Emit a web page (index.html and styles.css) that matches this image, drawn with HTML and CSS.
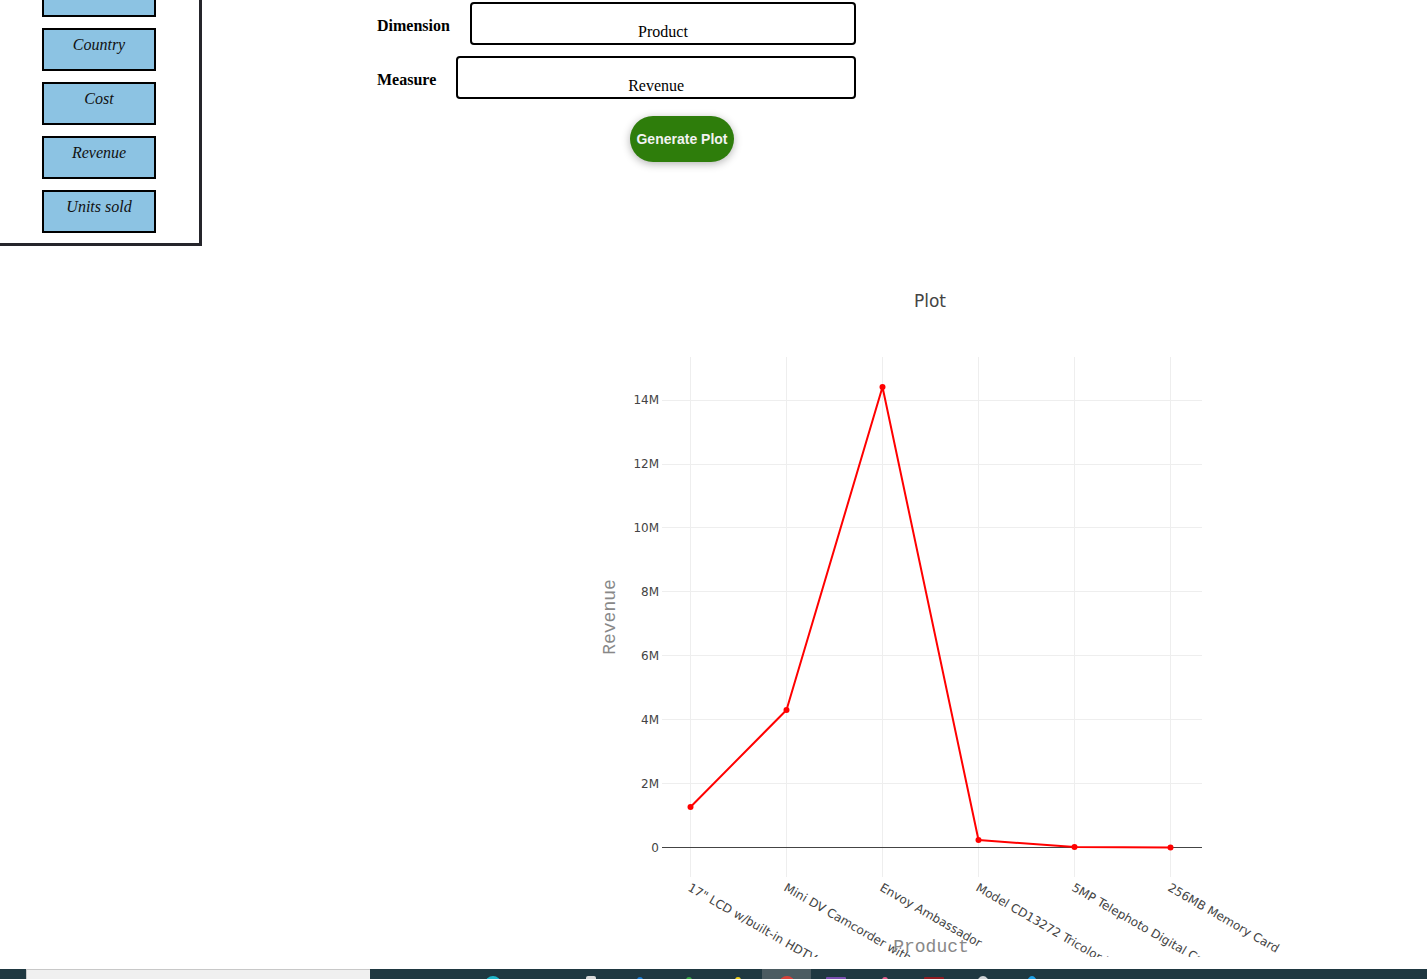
FILE: index.html
```html
<!DOCTYPE html>
<html>
<head>
<meta charset="utf-8">
<title>Plot builder</title>
<link rel="stylesheet" href="styles.css">
</head>
<body>
<div class="top">
  <div class="sidebar">
    <div class="field">Product</div>
    <div class="field">Country</div>
    <div class="field">Cost</div>
    <div class="field">Revenue</div>
    <div class="field">Units sold</div>
  </div>
  <div class="form">
    <div class="row">
      <label class="lbl">Dimension</label>
      <input class="box" type="text" value="Product" readonly>
    </div>
    <div class="row row2">
      <label class="lbl">Measure</label>
      <input class="box" type="text" value="Revenue" readonly>
    </div>
    <button class="gen">Generate Plot</button>
  </div>
</div>

<div class="chart">
  <svg width="700" height="700" viewBox="0 0 700 700" xmlns="http://www.w3.org/2000/svg">
    <rect x="0" y="0" width="700" height="700" fill="#fff"/>
    <g class="grid" stroke="#eeeeee" stroke-width="1">
      <line x1="108.5" y1="100" x2="108.5" y2="620"/>
      <line x1="204.5" y1="100" x2="204.5" y2="620"/>
      <line x1="300.5" y1="100" x2="300.5" y2="620"/>
      <line x1="396.5" y1="100" x2="396.5" y2="620"/>
      <line x1="492.5" y1="100" x2="492.5" y2="620"/>
      <line x1="588.5" y1="100" x2="588.5" y2="620"/>
      <line x1="80" y1="526.5" x2="620" y2="526.5"/>
      <line x1="80" y1="462.5" x2="620" y2="462.5"/>
      <line x1="80" y1="398.5" x2="620" y2="398.5"/>
      <line x1="80" y1="334.5" x2="620" y2="334.5"/>
      <line x1="80" y1="270.5" x2="620" y2="270.5"/>
      <line x1="80" y1="207.5" x2="620" y2="207.5"/>
      <line x1="80" y1="143.5" x2="620" y2="143.5"/>
    </g>
    <line x1="80" y1="590.5" x2="620" y2="590.5" stroke="#444" stroke-width="1"/>
    <g class="ytick" font-family="DejaVu Sans, sans-serif" font-size="12" fill="#444" text-anchor="end">
      <text x="77" y="594.7">0</text>
      <text x="77" y="530.8">2M</text>
      <text x="77" y="466.9">4M</text>
      <text x="77" y="403">6M</text>
      <text x="77" y="339.1">8M</text>
      <text x="77" y="275.2">10M</text>
      <text x="77" y="211.3">12M</text>
      <text x="77" y="147.4">14M</text>
    </g>
    <polyline points="108.5,550 204.5,453 300.5,130 396.5,583 492.5,590 588.5,590.5" fill="none" stroke="#ff0000" stroke-width="2" stroke-linejoin="round"/>
    <g fill="#ff0000">
      <circle cx="108.5" cy="550" r="3"/>
      <circle cx="204.5" cy="453" r="3"/>
      <circle cx="300.5" cy="130" r="3"/>
      <circle cx="396.5" cy="583" r="3"/>
      <circle cx="492.5" cy="590" r="3"/>
      <circle cx="588.5" cy="590.5" r="3"/>
    </g>
    <g class="xtick" font-family="DejaVu Sans, sans-serif" font-size="12" fill="#444">
      <text transform="translate(105,633) rotate(30)">17" LCD w/built-in HDTV Tuner</text>
      <text transform="translate(201,633) rotate(30)">Mini DV Camcorder with 3.5" Swivel LCD</text>
      <text transform="translate(297,633) rotate(30)">Envoy Ambassador</text>
      <text transform="translate(393,633) rotate(30)">Model CD13272 Tricolor Ink Cartridge</text>
      <text transform="translate(489,633) rotate(30)">5MP Telephoto Digital Camera</text>
      <text transform="translate(585,633) rotate(30)">256MB Memory Card</text>
    </g>
    <text x="348" y="50" font-family="DejaVu Sans, sans-serif" font-size="17" fill="#444" text-anchor="middle">Plot</text>
    <text x="349" y="695" font-family="Liberation Mono, monospace" font-size="18" fill="#888" text-anchor="middle">Product</text>
    <text transform="translate(33,360) rotate(-90)" font-family="Liberation Mono, monospace" font-size="18" fill="#888" text-anchor="middle">Revenue</text>
  </svg>
</div>

<div class="taskbar">
  <div class="search"></div>
  <div class="icons">
    <span class="slot"><i class="ic ic-teal"></i></span>
    <span class="slot"></span>
    <span class="slot"><i class="ic ic-grey"></i></span>
    <span class="slot"><i class="ic ic-blue small"></i></span>
    <span class="slot"><i class="ic ic-green small"></i></span>
    <span class="slot"><i class="ic ic-yellow small"></i></span>
    <span class="slot active"><i class="ic ic-red"></i></span>
    <span class="slot"><i class="ic ic-purple wide"></i></span>
    <span class="slot"><i class="ic ic-pink small"></i></span>
    <span class="slot"><i class="ic ic-darkred wide"></i></span>
    <span class="slot"><i class="ic ic-silver"></i></span>
    <span class="slot"><i class="ic ic-sky"></i></span>
  </div>
</div>
</body>
</html>
```

FILE: styles.css
```css
html, body {
  margin: 0;
  padding: 0;
  background: #fff;
}
body {
  font-family: "Liberation Serif", "Times New Roman", serif;
  color: #000;
  overflow: hidden;
}

.top {
  display: flex;
  align-items: flex-start;
}

.sidebar {
  width: 202px;
  box-sizing: border-box;
  margin-top: -26px;
  padding: 0 0 10px 42px;
  border-right: 3px solid #25252b;
  border-bottom: 3px solid #25252b;
  display: flex;
  flex-direction: column;
  gap: 11px;
  flex: none;
}

.field {
  width: 114px;
  height: 43px;
  box-sizing: border-box;
  border: 2px solid #000;
  background: #8cc3e3;
  font-style: italic;
  font-size: 16px;
  text-align: center;
  padding-top: 6px;
  color: #111;
}

.form {
  margin-left: 175px;
  margin-top: 2px;
  width: 479px;
  display: flex;
  flex-direction: column;
}

.row {
  display: flex;
  align-items: center;
  gap: 20px;
}
.row2 {
  margin-top: 11px;
}

.lbl {
  font-weight: bold;
  font-size: 16px;
  padding-top: 5px;
  white-space: nowrap;
}

.box {
  flex: 1;
  min-width: 0;
  height: 43px;
  box-sizing: border-box;
  border: 2px solid #000;
  border-radius: 4px;
  padding: 19px 4px 2px;
  font-family: "Liberation Serif", "Times New Roman", serif;
  font-size: 16px;
  color: #000;
  text-align: center;
  background: #fff;
  outline: none;
}

.gen {
  align-self: flex-start;
  margin-left: 253px;
  margin-top: 17px;
  width: 104px;
  height: 46px;
  border: none;
  border-radius: 23px;
  background: #2e7d0b;
  color: #f2f2f2;
  font-family: "Liberation Sans", Arial, sans-serif;
  font-weight: bold;
  font-size: 14px;
  padding: 0;
  box-shadow: 0 2px 8px rgba(0, 0, 0, 0.3);
}

.chart {
  margin-left: 582px;
  margin-top: 11px;
  width: 700px;
  height: 700px;
}
.chart svg {
  display: block;
}

.taskbar {
  position: fixed;
  left: 0;
  right: 0;
  bottom: 0;
  height: 10px;
  background: #1f3841;
  display: flex;
  overflow: hidden;
}
.search {
  margin-left: 26px;
  width: 344px;
  height: 10px;
  box-sizing: border-box;
  background: #f0f0f0;
  border-top: 1px solid #c8c8c8;
  border-left: 1px solid #c8c8c8;
  flex: none;
}
.icons {
  margin-left: 98px;
  display: flex;
}
.slot {
  width: 49px;
  height: 10px;
  display: flex;
  justify-content: center;
}
.slot.active {
  background: #4b5b61;
}
.ic {
  display: block;
  margin-top: 7px;
  width: 16px;
  height: 16px;
  border-radius: 50%;
}
.ic.small {
  width: 6px;
  height: 6px;
  margin-top: 8px;
}
.ic.wide {
  width: 20px;
  border-radius: 1px;
  margin-top: 8px;
}
.ic-teal { background: #1fb6c9; }
.ic-grey { background: #d9d9d9; width: 10px; border-radius: 2px; }
.ic-blue { background: #1f7fd6; }
.ic-green { background: #3aa845; }
.ic-yellow { background: #f1d21b; }
.ic-red { background: #d8413a; }
.ic-purple { background: #7a4fb0; }
.ic-pink { background: #e25b8a; }
.ic-darkred { background: #8f1c22; }
.ic-silver { background: #cfd3d6; width: 12px; }
.ic-sky { background: #1ea0e6; width: 10px; }
```
